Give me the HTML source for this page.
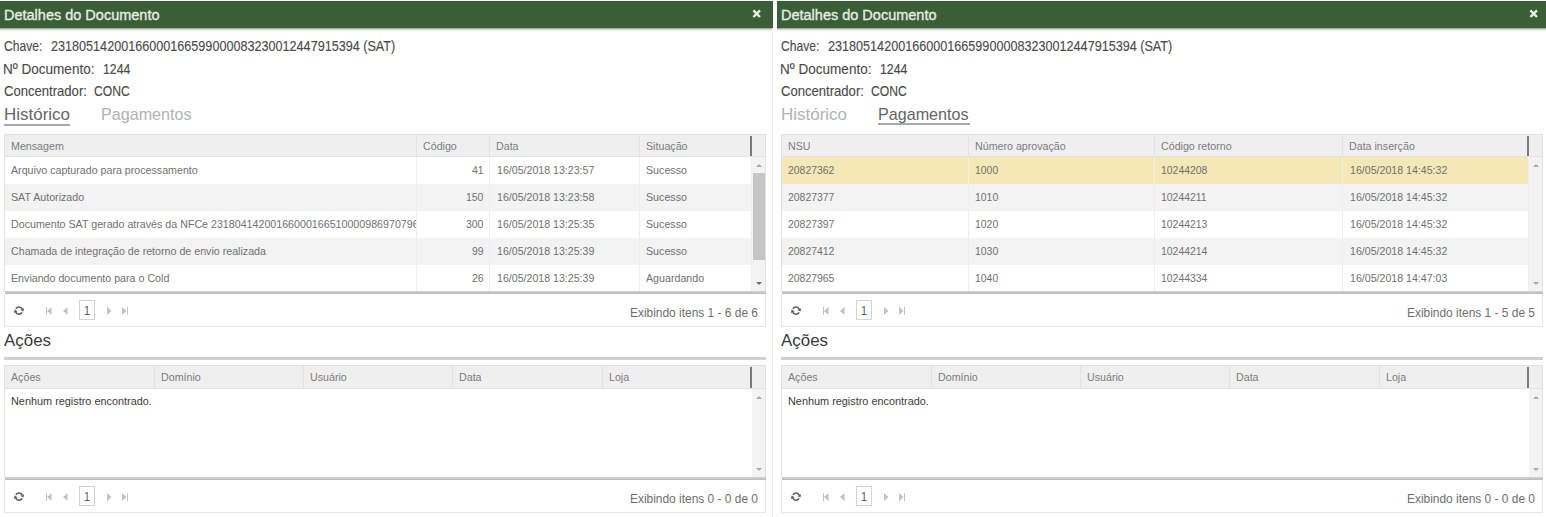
<!DOCTYPE html>
<html><head><meta charset="utf-8"><style>
html,body{margin:0;padding:0;background:#fff;width:1546px;height:517px;overflow:hidden;}
.panel{position:absolute;top:0;width:773px;height:517px;}
.t{position:absolute;font-family:"Liberation Sans",sans-serif;line-height:1;white-space:pre;}
.r{position:absolute;}
</style></head><body>
<div class="panel" style="left:0px;top:0px"><div class="r" style="left:0px;top:1px;width:772.5px;height:27px;background:#3a5f37;"></div><div class="r" style="left:0px;top:28px;width:772.5px;height:5px;background:linear-gradient(rgba(59,96,56,0.62), rgba(59,96,56,0.1) 40%, rgba(0,0,0,0.02) 70%, rgba(0,0,0,0));"></div><div class="t" style="left:3.96px;transform-origin:0 0;top:7.26px;font-size:15.4px;color:#e6ede3;transform:scaleX(0.9416);-webkit-text-stroke:0.35px #e6ede3;">Detalhes do Documento</div><svg class="r" style="left:752.2px;top:9.0px" width="9.4" height="9.4" viewBox="0 0 9.4 9.4"><path d="M1.4 1.4 L8.0 8.0 M8.0 1.4 L1.4 8.0" stroke="#e9f0e7" stroke-width="2.4"/></svg><div class="r" style="left:772px;top:28px;width:1px;height:489px;background:#f0f0f0;"></div><div class="t" style="left:4.00px;transform-origin:0 0;top:39.30px;font-size:14.3px;color:#4a4a4a;transform:scaleX(0.8482);-webkit-text-stroke:0.12px #4a4a4a;">Chave:</div><div class="t" style="left:50.70px;transform-origin:0 0;top:39.30px;font-size:14.3px;color:#4a4a4a;transform:scaleX(0.8825);-webkit-text-stroke:0.12px #4a4a4a;">23180514200166000166599000083230012447915394 (SAT)</div><div class="t" style="left:3.15px;transform-origin:0 0;top:62.10px;font-size:14.3px;color:#4a4a4a;transform:scaleX(0.9468);-webkit-text-stroke:0.12px #4a4a4a;">Nº Documento:</div><div class="t" style="left:102.64px;transform-origin:0 0;top:62.10px;font-size:14.3px;color:#4a4a4a;transform:scaleX(0.8589);-webkit-text-stroke:0.12px #4a4a4a;">1244</div><div class="t" style="left:4.00px;transform-origin:0 0;top:84.40px;font-size:14.3px;color:#4a4a4a;transform:scaleX(0.9149);-webkit-text-stroke:0.12px #4a4a4a;">Concentrador:</div><div class="t" style="left:94.30px;transform-origin:0 0;top:84.40px;font-size:14.3px;color:#4a4a4a;transform:scaleX(0.8523);-webkit-text-stroke:0.12px #4a4a4a;">CONC</div><div class="t" style="left:3.88px;transform-origin:0 0;top:106.55px;font-size:16.6px;color:#656565;transform:scaleX(1.0219);">Histórico</div><div class="t" style="left:101.03px;transform-origin:0 0;top:106.55px;font-size:16.6px;color:#b2b2b2;transform:scaleX(0.9720);">Pagamentos</div><div class="r" style="left:4px;top:123.5px;width:65.5px;height:2px;background:#a9a9a9;"></div><div class="r" style="left:4px;top:134px;width:762px;height:1px;background:#e2e2e2;"></div><div class="r" style="left:4px;top:134px;width:1px;height:158px;background:#e2e2e2;"></div><div class="r" style="left:765px;top:134px;width:1px;height:158px;background:#e2e2e2;"></div><div class="r" style="left:5px;top:135px;width:760px;height:22px;background:#efefef;"></div><div class="r" style="left:5px;top:156px;width:760px;height:1px;background:#e2e2e2;"></div><div class="r" style="left:5px;top:157px;width:746px;height:27px;background:#fff;"></div><div class="r" style="left:5px;top:184px;width:746px;height:27px;background:#f3f3f3;"></div><div class="r" style="left:5px;top:211px;width:746px;height:27px;background:#fff;"></div><div class="r" style="left:5px;top:238px;width:746px;height:27px;background:#f3f3f3;"></div><div class="r" style="left:5px;top:265px;width:746px;height:27px;background:#fff;"></div><div class="r" style="left:416px;top:135px;width:1px;height:21px;background:#e2e2e2;"></div><div class="r" style="left:416px;top:157px;width:1px;height:135px;background:#eeeeee;"></div><div class="r" style="left:489px;top:135px;width:1px;height:21px;background:#e2e2e2;"></div><div class="r" style="left:489px;top:157px;width:1px;height:135px;background:#eeeeee;"></div><div class="r" style="left:639px;top:135px;width:1px;height:21px;background:#e2e2e2;"></div><div class="r" style="left:639px;top:157px;width:1px;height:135px;background:#eeeeee;"></div><div class="r" style="left:751px;top:135px;width:1px;height:21px;background:#e2e2e2;"></div><div class="r" style="left:751px;top:157px;width:1px;height:135px;background:#eeeeee;"></div><div class="r" style="left:750.2px;top:135.5px;width:1.4px;height:20.5px;background:#7a7a7a;"></div><div class="t" style="left:11.00px;transform-origin:0 0;top:140.18px;font-size:11.6px;color:#7c7c7c;transform:scaleX(0.9200);">Mensagem</div><div class="t" style="left:423.00px;transform-origin:0 0;top:140.18px;font-size:11.6px;color:#7c7c7c;transform:scaleX(0.9200);">Código</div><div class="t" style="left:496.00px;transform-origin:0 0;top:140.18px;font-size:11.6px;color:#7c7c7c;transform:scaleX(0.9200);">Data</div><div class="t" style="left:646.00px;transform-origin:0 0;top:140.18px;font-size:11.6px;color:#7c7c7c;transform:scaleX(0.9200);">Situação</div><div class="r" style="left:5px;top:161.38px;width:411px;height:19.6px;overflow:hidden"><div class="r" style="left:-5px;top:-161.38px;width:1px;height:1px"><div class="t" style="left:11.00px;transform-origin:0 0;top:164.38px;font-size:11.6px;color:#717171;transform:scaleX(0.9200);">Arquivo capturado para processamento</div></div></div><div class="t" style="left:472.30px;transform-origin:0 0;top:164.38px;font-size:11.6px;color:#717171;transform:scaleX(0.9000);">41</div><div class="r" style="left:490px;top:161.38px;width:149px;height:19.6px;overflow:hidden"><div class="r" style="left:-490px;top:-161.38px;width:1px;height:1px"><div class="t" style="left:497.20px;transform-origin:0 0;top:164.38px;font-size:11.6px;color:#717171;transform:scaleX(0.9150);">16/05/2018 13:23:57</div></div></div><div class="r" style="left:640px;top:161.38px;width:111px;height:19.6px;overflow:hidden"><div class="r" style="left:-640px;top:-161.38px;width:1px;height:1px"><div class="t" style="left:646.00px;transform-origin:0 0;top:164.38px;font-size:11.6px;color:#717171;transform:scaleX(0.9200);">Sucesso</div></div></div><div class="r" style="left:5px;top:188.38px;width:411px;height:19.6px;overflow:hidden"><div class="r" style="left:-5px;top:-188.38px;width:1px;height:1px"><div class="t" style="left:11.00px;transform-origin:0 0;top:191.38px;font-size:11.6px;color:#717171;transform:scaleX(0.9200);">SAT Autorizado</div></div></div><div class="t" style="left:466.49px;transform-origin:0 0;top:191.38px;font-size:11.6px;color:#717171;transform:scaleX(0.9000);">150</div><div class="r" style="left:490px;top:188.38px;width:149px;height:19.6px;overflow:hidden"><div class="r" style="left:-490px;top:-188.38px;width:1px;height:1px"><div class="t" style="left:497.20px;transform-origin:0 0;top:191.38px;font-size:11.6px;color:#717171;transform:scaleX(0.9150);">16/05/2018 13:23:58</div></div></div><div class="r" style="left:640px;top:188.38px;width:111px;height:19.6px;overflow:hidden"><div class="r" style="left:-640px;top:-188.38px;width:1px;height:1px"><div class="t" style="left:646.00px;transform-origin:0 0;top:191.38px;font-size:11.6px;color:#717171;transform:scaleX(0.9200);">Sucesso</div></div></div><div class="r" style="left:5px;top:215.38px;width:411px;height:19.6px;overflow:hidden"><div class="r" style="left:-5px;top:-215.38px;width:1px;height:1px"><div class="t" style="left:11.00px;transform-origin:0 0;top:218.38px;font-size:11.6px;color:#717171;transform:scaleX(0.9200);">Documento SAT gerado através da NFCe 23180414200166000166510000986970796</div></div></div><div class="t" style="left:466.49px;transform-origin:0 0;top:218.38px;font-size:11.6px;color:#717171;transform:scaleX(0.9000);">300</div><div class="r" style="left:490px;top:215.38px;width:149px;height:19.6px;overflow:hidden"><div class="r" style="left:-490px;top:-215.38px;width:1px;height:1px"><div class="t" style="left:497.20px;transform-origin:0 0;top:218.38px;font-size:11.6px;color:#717171;transform:scaleX(0.9150);">16/05/2018 13:25:35</div></div></div><div class="r" style="left:640px;top:215.38px;width:111px;height:19.6px;overflow:hidden"><div class="r" style="left:-640px;top:-215.38px;width:1px;height:1px"><div class="t" style="left:646.00px;transform-origin:0 0;top:218.38px;font-size:11.6px;color:#717171;transform:scaleX(0.9200);">Sucesso</div></div></div><div class="r" style="left:5px;top:242.38px;width:411px;height:19.6px;overflow:hidden"><div class="r" style="left:-5px;top:-242.38px;width:1px;height:1px"><div class="t" style="left:11.00px;transform-origin:0 0;top:245.38px;font-size:11.6px;color:#717171;transform:scaleX(0.9200);">Chamada de integração de retorno de envio realizada</div></div></div><div class="t" style="left:472.30px;transform-origin:0 0;top:245.38px;font-size:11.6px;color:#717171;transform:scaleX(0.9000);">99</div><div class="r" style="left:490px;top:242.38px;width:149px;height:19.6px;overflow:hidden"><div class="r" style="left:-490px;top:-242.38px;width:1px;height:1px"><div class="t" style="left:497.20px;transform-origin:0 0;top:245.38px;font-size:11.6px;color:#717171;transform:scaleX(0.9150);">16/05/2018 13:25:39</div></div></div><div class="r" style="left:640px;top:242.38px;width:111px;height:19.6px;overflow:hidden"><div class="r" style="left:-640px;top:-242.38px;width:1px;height:1px"><div class="t" style="left:646.00px;transform-origin:0 0;top:245.38px;font-size:11.6px;color:#717171;transform:scaleX(0.9200);">Sucesso</div></div></div><div class="r" style="left:5px;top:269.38px;width:411px;height:19.6px;overflow:hidden"><div class="r" style="left:-5px;top:-269.38px;width:1px;height:1px"><div class="t" style="left:11.00px;transform-origin:0 0;top:272.38px;font-size:11.6px;color:#717171;transform:scaleX(0.9200);">Enviando documento para o Cold</div></div></div><div class="t" style="left:472.30px;transform-origin:0 0;top:272.38px;font-size:11.6px;color:#717171;transform:scaleX(0.9000);">26</div><div class="r" style="left:490px;top:269.38px;width:149px;height:19.6px;overflow:hidden"><div class="r" style="left:-490px;top:-269.38px;width:1px;height:1px"><div class="t" style="left:497.20px;transform-origin:0 0;top:272.38px;font-size:11.6px;color:#717171;transform:scaleX(0.9150);">16/05/2018 13:25:39</div></div></div><div class="r" style="left:640px;top:269.38px;width:111px;height:19.6px;overflow:hidden"><div class="r" style="left:-640px;top:-269.38px;width:1px;height:1px"><div class="t" style="left:646.00px;transform-origin:0 0;top:272.38px;font-size:11.6px;color:#717171;transform:scaleX(0.9200);">Aguardando</div></div></div><div class="r" style="left:752px;top:157px;width:13px;height:135px;background:#f3f3f3;"></div><div class="r" style="left:753px;top:173px;width:11.5px;height:87px;background:#c6c6c6;"></div><div class="r" style="left:755.7px;top:163.55px;width:0;height:0;border-left:3.0px solid transparent;border-right:3.0px solid transparent;border-bottom:3.5px solid #a8a8a8;"></div><div class="r" style="left:755.7px;top:281.75px;width:0;height:0;border-left:3.0px solid transparent;border-right:3.0px solid transparent;border-top:3.5px solid #6c6c6c;"></div><div class="r" style="left:5px;top:291px;width:761px;height:3px;background:linear-gradient(#d4d4d4,#bababa);"></div><div class="r" style="left:4px;top:294px;width:762px;height:33px;background:#fff;box-sizing:border-box;border:1px solid #e6e6e6;border-top:none;"></div><svg class="r" style="left:13.6px;top:305.4px" width="11" height="11" viewBox="0 0 11 11"><path d="M1.88 3.8 A3.6 3.6 0 0 1 8.26 4.08" fill="none" stroke="#5c5c5c" stroke-width="1.6"/><path d="M8.12 7.4 A3.6 3.6 0 0 1 1.74 7.12" fill="none" stroke="#5c5c5c" stroke-width="1.6"/><path d="M10.1 3.2 L6.4 4.9 L9.4 6.6 Z" fill="#5c5c5c"/><path d="M-0.1 8.0 L3.6 6.3 L0.6 4.6 Z" fill="#5c5c5c"/></svg><div class="r" style="left:45.5px;top:307px;width:1.3px;height:8px;background:#c2c2c2;"></div><svg class="r" style="left:47px;top:307px" width="5" height="8"><path d="M0 4 L4.5 0 L4.5 8 Z" fill="#c2c2c2"/></svg><svg class="r" style="left:63px;top:307px" width="5" height="8"><path d="M0 4 L4.5 0 L4.5 8 Z" fill="#c2c2c2"/></svg><div class="r" style="left:79px;top:300.4px;width:16px;height:19.5px;background:#fff;box-sizing:border-box;border:1px solid #d4d4d4;"></div><div class="t" style="left:83.80px;transform-origin:0 0;top:305.34px;font-size:12px;color:#5a5a5a;transform:scaleX(0.9000);">1</div><svg class="r" style="left:107px;top:307px" width="5" height="8"><path d="M4.5 4 L0 0 L0 8 Z" fill="#c2c2c2"/></svg><svg class="r" style="left:122px;top:307px" width="5" height="8"><path d="M4.5 4 L0 0 L0 8 Z" fill="#c2c2c2"/></svg><div class="r" style="left:127px;top:307px;width:1.3px;height:8px;background:#c2c2c2;"></div><div class="t" style="left:630.35px;transform-origin:0 0;top:307.43px;font-size:12.6px;color:#6e6e6e;transform:scaleX(0.9470);">Exibindo itens 1 - 6 de 6</div><div class="t" style="left:3.90px;transform-origin:0 0;top:332.14px;font-size:17.2px;color:#3a3a3a;transform:scaleX(0.9836);">Ações</div><div class="r" style="left:4px;top:357px;width:762px;height:2.5px;background:#d0d0d0;"></div><div class="r" style="left:4px;top:365px;width:762px;height:1px;background:#e2e2e2;"></div><div class="r" style="left:4px;top:365px;width:1px;height:113px;background:#e2e2e2;"></div><div class="r" style="left:765px;top:365px;width:1px;height:113px;background:#e2e2e2;"></div><div class="r" style="left:5px;top:366px;width:760px;height:23px;background:#efefef;"></div><div class="r" style="left:5px;top:388px;width:760px;height:1px;background:#e2e2e2;"></div><div class="r" style="left:154px;top:366px;width:1px;height:22px;background:#e2e2e2;"></div><div class="r" style="left:303px;top:366px;width:1px;height:22px;background:#e2e2e2;"></div><div class="r" style="left:452px;top:366px;width:1px;height:22px;background:#e2e2e2;"></div><div class="r" style="left:602px;top:366px;width:1px;height:22px;background:#e2e2e2;"></div><div class="r" style="left:751px;top:366px;width:1px;height:22px;background:#e2e2e2;"></div><div class="r" style="left:750.2px;top:366.5px;width:1.4px;height:21.5px;background:#7a7a7a;"></div><div class="t" style="left:11.00px;transform-origin:0 0;top:371.18px;font-size:11.6px;color:#7c7c7c;transform:scaleX(0.9200);">Ações</div><div class="t" style="left:161.00px;transform-origin:0 0;top:371.18px;font-size:11.6px;color:#7c7c7c;transform:scaleX(0.9200);">Domínio</div><div class="t" style="left:310.00px;transform-origin:0 0;top:371.18px;font-size:11.6px;color:#7c7c7c;transform:scaleX(0.9200);">Usuário</div><div class="t" style="left:459.00px;transform-origin:0 0;top:371.18px;font-size:11.6px;color:#7c7c7c;transform:scaleX(0.9200);">Data</div><div class="t" style="left:609.00px;transform-origin:0 0;top:371.18px;font-size:11.6px;color:#7c7c7c;transform:scaleX(0.9200);">Loja</div><div class="t" style="left:11.40px;transform-origin:0 0;top:395.81px;font-size:11.8px;color:#3c3c3c;transform:scaleX(0.9219);">Nenhum registro encontrado.</div><div class="r" style="left:752px;top:389px;width:13px;height:89px;background:#f3f3f3;"></div><div class="r" style="left:755.7px;top:395.55px;width:0;height:0;border-left:3.0px solid transparent;border-right:3.0px solid transparent;border-bottom:3.5px solid #a8a8a8;"></div><div class="r" style="left:755.7px;top:467.75px;width:0;height:0;border-left:3.0px solid transparent;border-right:3.0px solid transparent;border-top:3.5px solid #a8a8a8;"></div><div class="r" style="left:5px;top:477px;width:761px;height:3px;background:linear-gradient(#d4d4d4,#bababa);"></div><div class="r" style="left:4px;top:480px;width:762px;height:33px;background:#fff;box-sizing:border-box;border:1px solid #e6e6e6;border-top:none;"></div><svg class="r" style="left:13.6px;top:491.4px" width="11" height="11" viewBox="0 0 11 11"><path d="M1.88 3.8 A3.6 3.6 0 0 1 8.26 4.08" fill="none" stroke="#5c5c5c" stroke-width="1.6"/><path d="M8.12 7.4 A3.6 3.6 0 0 1 1.74 7.12" fill="none" stroke="#5c5c5c" stroke-width="1.6"/><path d="M10.1 3.2 L6.4 4.9 L9.4 6.6 Z" fill="#5c5c5c"/><path d="M-0.1 8.0 L3.6 6.3 L0.6 4.6 Z" fill="#5c5c5c"/></svg><div class="r" style="left:45.5px;top:493px;width:1.3px;height:8px;background:#c2c2c2;"></div><svg class="r" style="left:47px;top:493px" width="5" height="8"><path d="M0 4 L4.5 0 L4.5 8 Z" fill="#c2c2c2"/></svg><svg class="r" style="left:63px;top:493px" width="5" height="8"><path d="M0 4 L4.5 0 L4.5 8 Z" fill="#c2c2c2"/></svg><div class="r" style="left:79px;top:486.4px;width:16px;height:19.5px;background:#fff;box-sizing:border-box;border:1px solid #d4d4d4;"></div><div class="t" style="left:83.80px;transform-origin:0 0;top:491.34px;font-size:12px;color:#5a5a5a;transform:scaleX(0.9000);">1</div><svg class="r" style="left:107px;top:493px" width="5" height="8"><path d="M4.5 4 L0 0 L0 8 Z" fill="#c2c2c2"/></svg><svg class="r" style="left:122px;top:493px" width="5" height="8"><path d="M4.5 4 L0 0 L0 8 Z" fill="#c2c2c2"/></svg><div class="r" style="left:127px;top:493px;width:1.3px;height:8px;background:#c2c2c2;"></div><div class="t" style="left:630.35px;transform-origin:0 0;top:493.43px;font-size:12.6px;color:#6e6e6e;transform:scaleX(0.9470);">Exibindo itens 0 - 0 de 0</div></div><div class="panel" style="left:777px;top:0px"><div class="r" style="left:0px;top:1px;width:772.5px;height:27px;background:#3a5f37;"></div><div class="r" style="left:0px;top:28px;width:772.5px;height:5px;background:linear-gradient(rgba(59,96,56,0.62), rgba(59,96,56,0.1) 40%, rgba(0,0,0,0.02) 70%, rgba(0,0,0,0));"></div><div class="t" style="left:3.96px;transform-origin:0 0;top:7.26px;font-size:15.4px;color:#e6ede3;transform:scaleX(0.9416);-webkit-text-stroke:0.35px #e6ede3;">Detalhes do Documento</div><svg class="r" style="left:752.2px;top:9.0px" width="9.4" height="9.4" viewBox="0 0 9.4 9.4"><path d="M1.4 1.4 L8.0 8.0 M8.0 1.4 L1.4 8.0" stroke="#e9f0e7" stroke-width="2.4"/></svg><div class="r" style="left:772px;top:28px;width:1px;height:489px;background:#f0f0f0;"></div><div class="t" style="left:4.00px;transform-origin:0 0;top:39.30px;font-size:14.3px;color:#4a4a4a;transform:scaleX(0.8482);-webkit-text-stroke:0.12px #4a4a4a;">Chave:</div><div class="t" style="left:50.70px;transform-origin:0 0;top:39.30px;font-size:14.3px;color:#4a4a4a;transform:scaleX(0.8825);-webkit-text-stroke:0.12px #4a4a4a;">23180514200166000166599000083230012447915394 (SAT)</div><div class="t" style="left:3.15px;transform-origin:0 0;top:62.10px;font-size:14.3px;color:#4a4a4a;transform:scaleX(0.9468);-webkit-text-stroke:0.12px #4a4a4a;">Nº Documento:</div><div class="t" style="left:102.64px;transform-origin:0 0;top:62.10px;font-size:14.3px;color:#4a4a4a;transform:scaleX(0.8589);-webkit-text-stroke:0.12px #4a4a4a;">1244</div><div class="t" style="left:4.00px;transform-origin:0 0;top:84.40px;font-size:14.3px;color:#4a4a4a;transform:scaleX(0.9149);-webkit-text-stroke:0.12px #4a4a4a;">Concentrador:</div><div class="t" style="left:94.30px;transform-origin:0 0;top:84.40px;font-size:14.3px;color:#4a4a4a;transform:scaleX(0.8523);-webkit-text-stroke:0.12px #4a4a4a;">CONC</div><div class="t" style="left:3.88px;transform-origin:0 0;top:106.55px;font-size:16.6px;color:#b2b2b2;transform:scaleX(1.0219);">Histórico</div><div class="t" style="left:101.03px;transform-origin:0 0;top:106.55px;font-size:16.6px;color:#656565;transform:scaleX(0.9720);">Pagamentos</div><div class="r" style="left:101px;top:123px;width:92px;height:2px;background:#a9a9a9;"></div><div class="r" style="left:4px;top:134px;width:762px;height:1px;background:#e2e2e2;"></div><div class="r" style="left:4px;top:134px;width:1px;height:158px;background:#e2e2e2;"></div><div class="r" style="left:765px;top:134px;width:1px;height:158px;background:#e2e2e2;"></div><div class="r" style="left:5px;top:135px;width:760px;height:22px;background:#efefef;"></div><div class="r" style="left:5px;top:156px;width:760px;height:1px;background:#e2e2e2;"></div><div class="r" style="left:5px;top:157px;width:746px;height:27px;background:#f3e8b6;"></div><div class="r" style="left:5px;top:184px;width:746px;height:27px;background:#f3f3f3;"></div><div class="r" style="left:5px;top:211px;width:746px;height:27px;background:#fff;"></div><div class="r" style="left:5px;top:238px;width:746px;height:27px;background:#f3f3f3;"></div><div class="r" style="left:5px;top:265px;width:746px;height:27px;background:#fff;"></div><div class="r" style="left:191px;top:135px;width:1px;height:21px;background:#e2e2e2;"></div><div class="r" style="left:191px;top:157px;width:1px;height:135px;background:#eeeeee;"></div><div class="r" style="left:377px;top:135px;width:1px;height:21px;background:#e2e2e2;"></div><div class="r" style="left:377px;top:157px;width:1px;height:135px;background:#eeeeee;"></div><div class="r" style="left:565px;top:135px;width:1px;height:21px;background:#e2e2e2;"></div><div class="r" style="left:565px;top:157px;width:1px;height:135px;background:#eeeeee;"></div><div class="r" style="left:751px;top:135px;width:1px;height:21px;background:#e2e2e2;"></div><div class="r" style="left:751px;top:157px;width:1px;height:135px;background:#eeeeee;"></div><div class="r" style="left:750.2px;top:135.5px;width:1.4px;height:20.5px;background:#7a7a7a;"></div><div class="t" style="left:11.00px;transform-origin:0 0;top:140.18px;font-size:11.6px;color:#7c7c7c;transform:scaleX(0.9200);">NSU</div><div class="t" style="left:198.00px;transform-origin:0 0;top:140.18px;font-size:11.6px;color:#7c7c7c;transform:scaleX(0.9200);">Número aprovação</div><div class="t" style="left:384.00px;transform-origin:0 0;top:140.18px;font-size:11.6px;color:#7c7c7c;transform:scaleX(0.9200);">Código retorno</div><div class="t" style="left:572.00px;transform-origin:0 0;top:140.18px;font-size:11.6px;color:#7c7c7c;transform:scaleX(0.9200);">Data inserção</div><div class="r" style="left:5px;top:160.88px;width:186px;height:19.6px;overflow:hidden"><div class="r" style="left:-5px;top:-160.88px;width:1px;height:1px"><div class="t" style="left:11.00px;transform-origin:0 0;top:163.88px;font-size:11.6px;color:#717171;transform:scaleX(0.9000);">20827362</div></div></div><div class="r" style="left:192px;top:160.88px;width:185px;height:19.6px;overflow:hidden"><div class="r" style="left:-192px;top:-160.88px;width:1px;height:1px"><div class="t" style="left:198.00px;transform-origin:0 0;top:163.88px;font-size:11.6px;color:#717171;transform:scaleX(0.9000);">1000</div></div></div><div class="r" style="left:378px;top:160.88px;width:187px;height:19.6px;overflow:hidden"><div class="r" style="left:-378px;top:-160.88px;width:1px;height:1px"><div class="t" style="left:384.00px;transform-origin:0 0;top:163.88px;font-size:11.6px;color:#717171;transform:scaleX(0.9000);">10244208</div></div></div><div class="r" style="left:566px;top:160.88px;width:185px;height:19.6px;overflow:hidden"><div class="r" style="left:-566px;top:-160.88px;width:1px;height:1px"><div class="t" style="left:573.20px;transform-origin:0 0;top:163.88px;font-size:11.6px;color:#717171;transform:scaleX(0.9150);">16/05/2018 14:45:32</div></div></div><div class="r" style="left:5px;top:187.88px;width:186px;height:19.6px;overflow:hidden"><div class="r" style="left:-5px;top:-187.88px;width:1px;height:1px"><div class="t" style="left:11.00px;transform-origin:0 0;top:190.88px;font-size:11.6px;color:#717171;transform:scaleX(0.9000);">20827377</div></div></div><div class="r" style="left:192px;top:187.88px;width:185px;height:19.6px;overflow:hidden"><div class="r" style="left:-192px;top:-187.88px;width:1px;height:1px"><div class="t" style="left:198.00px;transform-origin:0 0;top:190.88px;font-size:11.6px;color:#717171;transform:scaleX(0.9000);">1010</div></div></div><div class="r" style="left:378px;top:187.88px;width:187px;height:19.6px;overflow:hidden"><div class="r" style="left:-378px;top:-187.88px;width:1px;height:1px"><div class="t" style="left:384.00px;transform-origin:0 0;top:190.88px;font-size:11.6px;color:#717171;transform:scaleX(0.9000);">10244211</div></div></div><div class="r" style="left:566px;top:187.88px;width:185px;height:19.6px;overflow:hidden"><div class="r" style="left:-566px;top:-187.88px;width:1px;height:1px"><div class="t" style="left:573.20px;transform-origin:0 0;top:190.88px;font-size:11.6px;color:#717171;transform:scaleX(0.9150);">16/05/2018 14:45:32</div></div></div><div class="r" style="left:5px;top:214.88px;width:186px;height:19.6px;overflow:hidden"><div class="r" style="left:-5px;top:-214.88px;width:1px;height:1px"><div class="t" style="left:11.00px;transform-origin:0 0;top:217.88px;font-size:11.6px;color:#717171;transform:scaleX(0.9000);">20827397</div></div></div><div class="r" style="left:192px;top:214.88px;width:185px;height:19.6px;overflow:hidden"><div class="r" style="left:-192px;top:-214.88px;width:1px;height:1px"><div class="t" style="left:198.00px;transform-origin:0 0;top:217.88px;font-size:11.6px;color:#717171;transform:scaleX(0.9000);">1020</div></div></div><div class="r" style="left:378px;top:214.88px;width:187px;height:19.6px;overflow:hidden"><div class="r" style="left:-378px;top:-214.88px;width:1px;height:1px"><div class="t" style="left:384.00px;transform-origin:0 0;top:217.88px;font-size:11.6px;color:#717171;transform:scaleX(0.9000);">10244213</div></div></div><div class="r" style="left:566px;top:214.88px;width:185px;height:19.6px;overflow:hidden"><div class="r" style="left:-566px;top:-214.88px;width:1px;height:1px"><div class="t" style="left:573.20px;transform-origin:0 0;top:217.88px;font-size:11.6px;color:#717171;transform:scaleX(0.9150);">16/05/2018 14:45:32</div></div></div><div class="r" style="left:5px;top:241.88px;width:186px;height:19.6px;overflow:hidden"><div class="r" style="left:-5px;top:-241.88px;width:1px;height:1px"><div class="t" style="left:11.00px;transform-origin:0 0;top:244.88px;font-size:11.6px;color:#717171;transform:scaleX(0.9000);">20827412</div></div></div><div class="r" style="left:192px;top:241.88px;width:185px;height:19.6px;overflow:hidden"><div class="r" style="left:-192px;top:-241.88px;width:1px;height:1px"><div class="t" style="left:198.00px;transform-origin:0 0;top:244.88px;font-size:11.6px;color:#717171;transform:scaleX(0.9000);">1030</div></div></div><div class="r" style="left:378px;top:241.88px;width:187px;height:19.6px;overflow:hidden"><div class="r" style="left:-378px;top:-241.88px;width:1px;height:1px"><div class="t" style="left:384.00px;transform-origin:0 0;top:244.88px;font-size:11.6px;color:#717171;transform:scaleX(0.9000);">10244214</div></div></div><div class="r" style="left:566px;top:241.88px;width:185px;height:19.6px;overflow:hidden"><div class="r" style="left:-566px;top:-241.88px;width:1px;height:1px"><div class="t" style="left:573.20px;transform-origin:0 0;top:244.88px;font-size:11.6px;color:#717171;transform:scaleX(0.9150);">16/05/2018 14:45:32</div></div></div><div class="r" style="left:5px;top:268.88px;width:186px;height:19.6px;overflow:hidden"><div class="r" style="left:-5px;top:-268.88px;width:1px;height:1px"><div class="t" style="left:11.00px;transform-origin:0 0;top:271.88px;font-size:11.6px;color:#717171;transform:scaleX(0.9000);">20827965</div></div></div><div class="r" style="left:192px;top:268.88px;width:185px;height:19.6px;overflow:hidden"><div class="r" style="left:-192px;top:-268.88px;width:1px;height:1px"><div class="t" style="left:198.00px;transform-origin:0 0;top:271.88px;font-size:11.6px;color:#717171;transform:scaleX(0.9000);">1040</div></div></div><div class="r" style="left:378px;top:268.88px;width:187px;height:19.6px;overflow:hidden"><div class="r" style="left:-378px;top:-268.88px;width:1px;height:1px"><div class="t" style="left:384.00px;transform-origin:0 0;top:271.88px;font-size:11.6px;color:#717171;transform:scaleX(0.9000);">10244334</div></div></div><div class="r" style="left:566px;top:268.88px;width:185px;height:19.6px;overflow:hidden"><div class="r" style="left:-566px;top:-268.88px;width:1px;height:1px"><div class="t" style="left:573.20px;transform-origin:0 0;top:271.88px;font-size:11.6px;color:#717171;transform:scaleX(0.9150);">16/05/2018 14:47:03</div></div></div><div class="r" style="left:752px;top:157px;width:13px;height:135px;background:#f3f3f3;"></div><div class="r" style="left:755.7px;top:163.55px;width:0;height:0;border-left:3.0px solid transparent;border-right:3.0px solid transparent;border-bottom:3.5px solid #a8a8a8;"></div><div class="r" style="left:755.7px;top:281.75px;width:0;height:0;border-left:3.0px solid transparent;border-right:3.0px solid transparent;border-top:3.5px solid #a8a8a8;"></div><div class="r" style="left:5px;top:291px;width:761px;height:3px;background:linear-gradient(#d4d4d4,#bababa);"></div><div class="r" style="left:4px;top:294px;width:762px;height:33px;background:#fff;box-sizing:border-box;border:1px solid #e6e6e6;border-top:none;"></div><svg class="r" style="left:13.6px;top:305.4px" width="11" height="11" viewBox="0 0 11 11"><path d="M1.88 3.8 A3.6 3.6 0 0 1 8.26 4.08" fill="none" stroke="#5c5c5c" stroke-width="1.6"/><path d="M8.12 7.4 A3.6 3.6 0 0 1 1.74 7.12" fill="none" stroke="#5c5c5c" stroke-width="1.6"/><path d="M10.1 3.2 L6.4 4.9 L9.4 6.6 Z" fill="#5c5c5c"/><path d="M-0.1 8.0 L3.6 6.3 L0.6 4.6 Z" fill="#5c5c5c"/></svg><div class="r" style="left:45.5px;top:307px;width:1.3px;height:8px;background:#c2c2c2;"></div><svg class="r" style="left:47px;top:307px" width="5" height="8"><path d="M0 4 L4.5 0 L4.5 8 Z" fill="#c2c2c2"/></svg><svg class="r" style="left:63px;top:307px" width="5" height="8"><path d="M0 4 L4.5 0 L4.5 8 Z" fill="#c2c2c2"/></svg><div class="r" style="left:79px;top:300.4px;width:16px;height:19.5px;background:#fff;box-sizing:border-box;border:1px solid #d4d4d4;"></div><div class="t" style="left:83.80px;transform-origin:0 0;top:305.34px;font-size:12px;color:#5a5a5a;transform:scaleX(0.9000);">1</div><svg class="r" style="left:107px;top:307px" width="5" height="8"><path d="M4.5 4 L0 0 L0 8 Z" fill="#c2c2c2"/></svg><svg class="r" style="left:122px;top:307px" width="5" height="8"><path d="M4.5 4 L0 0 L0 8 Z" fill="#c2c2c2"/></svg><div class="r" style="left:127px;top:307px;width:1.3px;height:8px;background:#c2c2c2;"></div><div class="t" style="left:630.35px;transform-origin:0 0;top:307.43px;font-size:12.6px;color:#6e6e6e;transform:scaleX(0.9470);">Exibindo itens 1 - 5 de 5</div><div class="t" style="left:3.90px;transform-origin:0 0;top:332.14px;font-size:17.2px;color:#3a3a3a;transform:scaleX(0.9836);">Ações</div><div class="r" style="left:4px;top:357px;width:762px;height:2.5px;background:#d0d0d0;"></div><div class="r" style="left:4px;top:365px;width:762px;height:1px;background:#e2e2e2;"></div><div class="r" style="left:4px;top:365px;width:1px;height:113px;background:#e2e2e2;"></div><div class="r" style="left:765px;top:365px;width:1px;height:113px;background:#e2e2e2;"></div><div class="r" style="left:5px;top:366px;width:760px;height:23px;background:#efefef;"></div><div class="r" style="left:5px;top:388px;width:760px;height:1px;background:#e2e2e2;"></div><div class="r" style="left:154px;top:366px;width:1px;height:22px;background:#e2e2e2;"></div><div class="r" style="left:303px;top:366px;width:1px;height:22px;background:#e2e2e2;"></div><div class="r" style="left:452px;top:366px;width:1px;height:22px;background:#e2e2e2;"></div><div class="r" style="left:602px;top:366px;width:1px;height:22px;background:#e2e2e2;"></div><div class="r" style="left:751px;top:366px;width:1px;height:22px;background:#e2e2e2;"></div><div class="r" style="left:750.2px;top:366.5px;width:1.4px;height:21.5px;background:#7a7a7a;"></div><div class="t" style="left:11.00px;transform-origin:0 0;top:371.18px;font-size:11.6px;color:#7c7c7c;transform:scaleX(0.9200);">Ações</div><div class="t" style="left:161.00px;transform-origin:0 0;top:371.18px;font-size:11.6px;color:#7c7c7c;transform:scaleX(0.9200);">Domínio</div><div class="t" style="left:310.00px;transform-origin:0 0;top:371.18px;font-size:11.6px;color:#7c7c7c;transform:scaleX(0.9200);">Usuário</div><div class="t" style="left:459.00px;transform-origin:0 0;top:371.18px;font-size:11.6px;color:#7c7c7c;transform:scaleX(0.9200);">Data</div><div class="t" style="left:609.00px;transform-origin:0 0;top:371.18px;font-size:11.6px;color:#7c7c7c;transform:scaleX(0.9200);">Loja</div><div class="t" style="left:11.40px;transform-origin:0 0;top:395.81px;font-size:11.8px;color:#3c3c3c;transform:scaleX(0.9219);">Nenhum registro encontrado.</div><div class="r" style="left:752px;top:389px;width:13px;height:89px;background:#f3f3f3;"></div><div class="r" style="left:755.7px;top:395.55px;width:0;height:0;border-left:3.0px solid transparent;border-right:3.0px solid transparent;border-bottom:3.5px solid #a8a8a8;"></div><div class="r" style="left:755.7px;top:467.75px;width:0;height:0;border-left:3.0px solid transparent;border-right:3.0px solid transparent;border-top:3.5px solid #a8a8a8;"></div><div class="r" style="left:5px;top:477px;width:761px;height:3px;background:linear-gradient(#d4d4d4,#bababa);"></div><div class="r" style="left:4px;top:480px;width:762px;height:33px;background:#fff;box-sizing:border-box;border:1px solid #e6e6e6;border-top:none;"></div><svg class="r" style="left:13.6px;top:491.4px" width="11" height="11" viewBox="0 0 11 11"><path d="M1.88 3.8 A3.6 3.6 0 0 1 8.26 4.08" fill="none" stroke="#5c5c5c" stroke-width="1.6"/><path d="M8.12 7.4 A3.6 3.6 0 0 1 1.74 7.12" fill="none" stroke="#5c5c5c" stroke-width="1.6"/><path d="M10.1 3.2 L6.4 4.9 L9.4 6.6 Z" fill="#5c5c5c"/><path d="M-0.1 8.0 L3.6 6.3 L0.6 4.6 Z" fill="#5c5c5c"/></svg><div class="r" style="left:45.5px;top:493px;width:1.3px;height:8px;background:#c2c2c2;"></div><svg class="r" style="left:47px;top:493px" width="5" height="8"><path d="M0 4 L4.5 0 L4.5 8 Z" fill="#c2c2c2"/></svg><svg class="r" style="left:63px;top:493px" width="5" height="8"><path d="M0 4 L4.5 0 L4.5 8 Z" fill="#c2c2c2"/></svg><div class="r" style="left:79px;top:486.4px;width:16px;height:19.5px;background:#fff;box-sizing:border-box;border:1px solid #d4d4d4;"></div><div class="t" style="left:83.80px;transform-origin:0 0;top:491.34px;font-size:12px;color:#5a5a5a;transform:scaleX(0.9000);">1</div><svg class="r" style="left:107px;top:493px" width="5" height="8"><path d="M4.5 4 L0 0 L0 8 Z" fill="#c2c2c2"/></svg><svg class="r" style="left:122px;top:493px" width="5" height="8"><path d="M4.5 4 L0 0 L0 8 Z" fill="#c2c2c2"/></svg><div class="r" style="left:127px;top:493px;width:1.3px;height:8px;background:#c2c2c2;"></div><div class="t" style="left:630.35px;transform-origin:0 0;top:493.43px;font-size:12.6px;color:#6e6e6e;transform:scaleX(0.9470);">Exibindo itens 0 - 0 de 0</div></div>
</body></html>
